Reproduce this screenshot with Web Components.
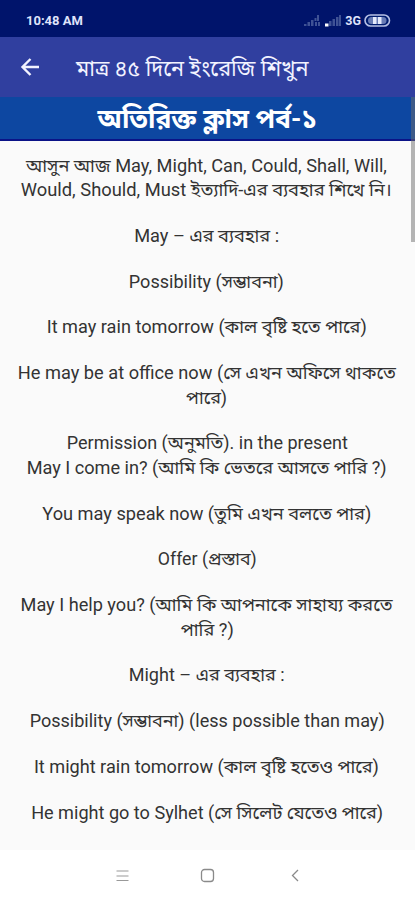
<!DOCTYPE html>
<html lang="bn"><head><meta charset="utf-8"><title>Lesson</title>
<style>body{margin:0;background:#fafafa;font-family:Roboto,"Noto Sans Bengali","Noto Sans",sans-serif}</style></head>
<body><lesson-app></lesson-app>
<script>
const define=(name,html,after)=>customElements.define(name,class extends HTMLElement{
  constructor(){super();this.attachShadow({mode:'open'}).innerHTML=html;}
  connectedCallback(){if(after)after(this);}
});
define('status-bar',`<style>
:host{display:flex;box-sizing:border-box;height:37px;background:#00146b;color:#dfe3fa;align-items:center;padding:4px 24px 0 26px;font:700 13px Roboto,sans-serif}
time{flex:1}svg{display:block}.net{margin:0 3px 0 3px;font-size:12.500px}
</style><time>10:48 AM</time>
<svg width="38" height="13" viewBox="0 0 38 13"><g fill="#3f5295"><path d="M0 10h2.500v2H0zM3.500 8h2.500v4H3.500zM7 6h2.500v6H7zM10.500 4h2v3h-2zM13 1h2v6h-2zM11 8h2v4h-2zM14 8h2v4h-2z"/><path d="M25 7h2.500v5H25zM28.500 5h2.500v7h-2.500zM32 3h2.500v9H32zM35 1h2v11h-2z"/></g><path fill="#fff" d="M21 9.500h3.500v3H21z"/></svg>
<span class="net">3G</span>
<svg width="27" height="13" viewBox="0 0 27 13"><rect x="1" y="1" width="24.500" height="11" rx="5.500" fill="#001c70" stroke="#b6c0e5" stroke-width="1.600"/><rect x="4" y="3" width="18.500" height="7" rx="3.500" fill="#687bb5"/><path d="M9 3h3.500v7H9zM14 3h3.500v7H14z" fill="#e4e9fb"/></svg>`);
define('app-bar',`<style>
:host{display:flex;box-sizing:border-box;height:60px;background:#303f9f;color:#f2f3ff;align-items:center;padding-left:20px;gap:35px}
span{font-size:21.600px;white-space:nowrap;padding-top:6px}svg{display:block}
</style><svg width="21" height="20" viewBox="0 0 21 20"><path d="M19 10H3M10.500 2L2.500 10l8 8" fill="none" stroke="#f2f3ff" stroke-width="2.400"/></svg><span><slot></slot></span>`);
define('lesson-title',`<style>
:host{display:flex;box-sizing:border-box;height:44px;background:#0d47a1;border-bottom:2px solid #0b1387;color:#fff;align-items:center;justify-content:center;font-size:26.400px;line-height:36px;font-weight:700;padding-top:2px}
</style><slot></slot>`);
/* A centred line; "fit" gives the width its text is justified to. */
define('lesson-line',`<style>:host{display:flex;justify-content:center;height:24.600px;line-height:24.600px;white-space:nowrap;font-size:18px}
:host([gap]){margin-top:21.130px}span{display:block}</style><span><slot></slot></span>`,el=>{
  const s=el.shadowRoot.querySelector('span');
  requestAnimationFrame(()=>{const w=s.getBoundingClientRect().width;
    s.style.transform='scaleX('+((+el.getAttribute('fit')+2)/w).toFixed(4)+')';});
});
define('nav-bar',`<style>
:host{display:flex;height:50px;background:#fff;align-items:center;justify-content:space-between;padding:1px 113px 0 114px;box-sizing:border-box}svg{display:block}
</style>
<svg width="16" height="16" viewBox="0 0 16 16"><path d="M2.500 3h12M2.500 8h12M2.500 12.500h12" stroke="#999"/></svg>
<svg width="16" height="16" viewBox="0 0 16 16"><rect x="1.500" y="1.500" width="12" height="12" rx="3" fill="none" stroke="#8a8a8a" stroke-width="1.300"/></svg>
<svg width="16" height="16" viewBox="0 0 16 16"><path d="M12 2L6.500 7.500l5.500 5.500" fill="none" stroke="#8a8a8a" stroke-width="1.300"/></svg>`);
define('scroll-thumb',`<style>:host{display:block;position:absolute;right:0;top:97px;width:4px;height:145px;background:rgba(110,110,110,.5)}</style>`);
define('lesson-app',`<style>
:host{display:flex;flex-direction:column;height:900px;background:#fafafa;color:#333;overflow:hidden;position:relative}
main{flex:1;min-height:0;padding:12.600px 1.400px 0 0;box-sizing:border-box}
</style>
<status-bar></status-bar><app-bar>মাত্র ৪৫ দিনে ইংরেজি শিখুন</app-bar><lesson-title>অতিরিক্ত ক্লাস পর্ব-১</lesson-title>
<main>
<lesson-line fit="359">আসুন আজ May, Might, Can, Could, Shall, Will,</lesson-line>
<lesson-line fit="369">Would, Should, Must ইত্যাদি-এর ব্যবহার শিখে নি।</lesson-line>
<lesson-line gap fit="143">May – এর ব্যবহার :</lesson-line>
<lesson-line gap fit="153">Possibility (সম্ভাবনা)</lesson-line>
<lesson-line gap fit="318">It may rain tomorrow (কাল বৃষ্টি হতে পারে)</lesson-line>
<lesson-line gap fit="376">He may be at office now (সে এখন অফিসে থাকতে</lesson-line>
<lesson-line fit="39">পারে)</lesson-line>
<lesson-line gap fit="279">Permission (অনুমতি). in the present</lesson-line>
<lesson-line fit="358">May I come in? (আমি কি ভেতরে আসতে পারি ?)</lesson-line>
<lesson-line gap fit="327">You may speak now (তুমি এখন বলতে পার)</lesson-line>
<lesson-line gap fit="97">Offer (প্রস্তাব)</lesson-line>
<lesson-line gap fit="370">May I help you? (আমি কি আপনাকে সাহায্য করতে</lesson-line>
<lesson-line fit="51">পারি ?)</lesson-line>
<lesson-line gap fit="154">Might – এর ব্যবহার :</lesson-line>
<lesson-line gap fit="353">Possibility (সম্ভাবনা) (less possible than may)</lesson-line>
<lesson-line gap fit="343">It might rain tomorrow (কাল বৃষ্টি হতেও পারে)</lesson-line>
<lesson-line gap fit="350">He might go to Sylhet (সে সিলেট যেতেও পারে)</lesson-line>
</main><nav-bar></nav-bar><scroll-thumb></scroll-thumb>`);
</script></body></html>
